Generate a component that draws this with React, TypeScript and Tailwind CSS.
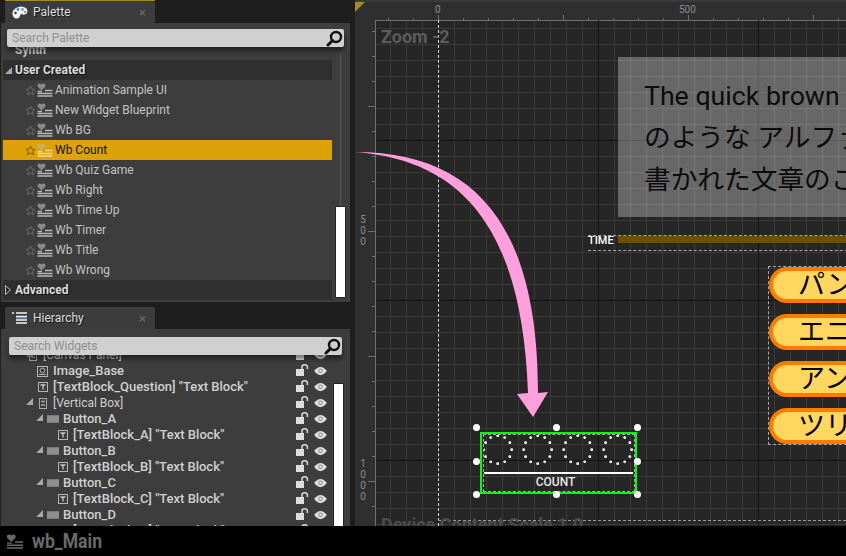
import React from "react";

const Search = () => (
  <svg width="17" height="17" viewBox="0 0 17 17" className="shrink-0">
    <circle cx="10" cy="7" r="5" fill="none" stroke="#111" strokeWidth="2.4" />
    <path d="M6.5 10.5 L2 15" stroke="#111" strokeWidth="3" strokeLinecap="round" />
  </svg>
);

const Star = ({ c = "#6a6a6a" }: { c?: string }) => (
  <svg width="11" height="11" viewBox="0 0 11 11" className="shrink-0">
    <path d="M5.5 1 L6.8 4 L10 4.3 L7.6 6.4 L8.4 9.7 L5.5 8 L2.6 9.7 L3.4 6.4 L1 4.3 L4.2 4 Z" fill="none" stroke={c} strokeWidth="1" />
  </svg>
);

const WidgetIcon = ({ c = "#8a8a8a", l = "#b8b8b8", w = 16, h = 14 }: { c?: string; l?: string; w?: number; h?: number }) => (
  <svg width={w} height={h} viewBox="0 0 16 14" className="shrink-0">
    <path d="M4.5 7.5 L0.5 3.5 Q0 1 2 0.5 Q3.6 0.3 4.5 1.5 Q5.4 0.3 7 0.5 Q9 1 8.5 3.5 Z" fill={c} />
    <path d="M0.5 8.5 H5 M8 7.5 H15.5 M0.5 10.5 H15.5 M0.5 13 H15.5" stroke={l} strokeWidth="1.3" />
  </svg>
);

const Lock = () => (
  <svg width="13" height="12" viewBox="0 0 13 12" className="shrink-0">
    <rect x="0" y="5" width="8" height="7" fill="#dcdcdc" />
    <path d="M6 5 V3 Q6 0.8 8.6 0.8 Q11.4 0.8 11.4 3 V5" fill="none" stroke="#dcdcdc" strokeWidth="1.5" />
  </svg>
);

const Eye = () => (
  <svg width="13" height="10" viewBox="0 0 13 10" className="shrink-0">
    <path d="M0.5 5 Q6.5 -2.5 12.5 5 Q6.5 12.5 0.5 5 Z" fill="#e8e8e8" stroke="#e8e8e8" strokeWidth="0.6" />
    <circle cx="6.5" cy="4.8" r="2.4" fill="#8c8c8c" />
    <circle cx="6.5" cy="4.8" r="1.2" fill="#e8e8e8" />
  </svg>
);

const Tri = () => (
  <svg width="7" height="7" viewBox="0 0 7 7" className="shrink-0">
    <path d="M7 0 V7 H0 Z" fill="#a8a8a8" />
  </svg>
);

const TIcon = () => (
  <svg width="10" height="10" viewBox="0 0 10 10" className="shrink-0">
    <rect x="0.5" y="0.5" width="9" height="9" fill="none" stroke="#b4b4b4" />
    <path d="M2.5 3 H7.5 M5 3 V7.5" stroke="#c8c8c8" strokeWidth="1.3" />
  </svg>
);

const ImageIcon = () => (
  <svg width="11" height="11" viewBox="0 0 11 11" className="shrink-0">
    <rect x="0.5" y="0.5" width="10" height="10" fill="none" stroke="#b4b4b4" />
    <circle cx="5.5" cy="4.5" r="2.4" fill="none" stroke="#b4b4b4" />
    <path d="M2 8.5 H9" stroke="#b4b4b4" />
  </svg>
);

const VBoxIcon = () => (
  <svg width="8" height="11" viewBox="0 0 8 11" className="shrink-0">
    <rect x="0.5" y="0.5" width="7" height="10" fill="none" stroke="#a8a8a8" />
    <path d="M2 3.5 H6 M2 7 H6" stroke="#a8a8a8" strokeWidth="1.4" />
  </svg>
);

const ButtonIcon = () => <div className="w-[12px] h-[8px] shrink-0 bg-[#8e8e8e] border-y border-[#7a7a7a]" />;

const palette = ["Animation Sample UI", "New Widget Blueprint", "Wb BG", "Wb Count", "Wb Quiz Game", "Wb Right", "Wb Time Up", "Wb Timer", "Wb Title", "Wb Wrong"];

type H = { t: string; tri?: number; icon: React.ReactNode; x: number; tx: number; w?: string };
const hierarchy: H[] = [
  { t: "[Canvas Panel]", tri: 26, icon: <VBoxIcon />, x: 29, tx: 43, w: "font-normal text-[12px]" },
  { t: "Image_Base", icon: <ImageIcon />, x: 37, tx: 53 },
  { t: '[TextBlock_Question] "Text Block"', icon: <TIcon />, x: 38, tx: 53 },
  { t: "[Vertical Box]", tri: 26, icon: <VBoxIcon />, x: 39, tx: 53, w: "font-normal text-[12px]" },
  { t: "Button_A", tri: 36, icon: <ButtonIcon />, x: 47, tx: 63 },
  { t: '[TextBlock_A] "Text Block"', icon: <TIcon />, x: 58, tx: 73 },
  { t: "Button_B", tri: 36, icon: <ButtonIcon />, x: 47, tx: 63 },
  { t: '[TextBlock_B] "Text Block"', icon: <TIcon />, x: 58, tx: 73 },
  { t: "Button_C", tri: 36, icon: <ButtonIcon />, x: 47, tx: 63 },
  { t: '[TextBlock_C] "Text Block"', icon: <TIcon />, x: 58, tx: 73 },
  { t: "Button_D", tri: 36, icon: <ButtonIcon />, x: 47, tx: 63 },
  { t: '[TextBlock_D] "Text Block"', icon: <TIcon />, x: 58, tx: 73 },
];

const Tab = ({ icon, label }: { icon: React.ReactNode; label: string }) => (
  <div className="ml-[5px] w-[150px] h-[22px] bg-[#3c3c3c] flex items-center pl-[6px] pr-[9px] gap-[5px] rounded-t-[2px]">
    <span className="w-[17px] flex justify-center">{icon}</span>
    <span className="flex-1 text-[12px] text-[#dcdcdc] [text-shadow:1px_1px_0_#1a1a1a]">{label}</span>
    <span className="text-[13px] leading-none text-[#6a6a6a]">×</span>
  </div>
);

const SearchBar = ({ ph, cls }: { ph: string; cls: string }) => (
  <div className={"relative z-10 h-[18px] rounded-[2px] bg-[#d0d0d0] flex items-center justify-between pl-[5px] pr-[1px] text-[12px] text-[#8f8f8f] shadow-[0_4px_4px_rgba(0,0,0,0.45)] " + cls}>
    <span>{ph}</span>
    <Search />
  </div>
);

const Ring = ({ cx }: { cx: number }) => (
  <>
    {Array.from({ length: 12 }).map((_, i) => {
      const a = (i * Math.PI) / 6;
      return <circle key={i} cx={cx + 14 * Math.sin(a)} cy={14.7 + 14 * Math.cos(a)} r="1.4" fill="#fff" />;
    })}
  </>
);

const Handle = ({ cls }: { cls: string }) => <div className={"absolute w-[7px] h-[7px] rounded-full bg-white " + cls} />;

const PillRow = ({ t }: { t: string }) => (
  <div className="h-[36px] rounded-l-full border-y-[4px] border-l-[4px] border-[#ff7b00] bg-[#ffd75e] pl-[25px] text-[27px] leading-[28px] text-black whitespace-nowrap">{t}</div>
);

export default function App() {
  return (
    <div className="w-[846px] h-[556px] overflow-hidden flex flex-col bg-[#1e1e1e] font-['Roboto','Noto_Sans_CJK_JP',sans-serif]">
      <div className="flex-1 flex min-h-0">
        {/* left column */}
        <div className="w-[350px] shrink-0 flex flex-col">
          <div className="ml-[5px] w-[150px] h-[1px] bg-[#a88a20]" />
          <Tab
            label="Palette"
            icon={
              <svg width="16" height="13" viewBox="0 0 16 13">
                <path d="M1 10 Q-1 5 4 2 Q9 -1 14 2 Q17 5 14 8 Q11 9.5 10 8 Q8 8 8 10 Q7 13 4 12.5 Q2 12.5 1 10 Z" fill="#f2f2f2" />
                <circle cx="6" cy="3.5" r="1.4" fill="#3b86c9" />
                <circle cx="10.5" cy="3.5" r="1.4" fill="#6aa5d8" />
                <circle cx="13" cy="6" r="1.1" fill="#5a8fc0" />
                <circle cx="3.5" cy="7" r="1.3" fill="#444" />
              </svg>
            }
          />
          <div className="ml-[1px] h-[279px] bg-[#3d3d3d] pt-[6px] pl-[2px] relative overflow-hidden">
            <SearchBar ph="Search Palette" cls="ml-[4px] w-[337px]" />
            <div className="-mt-[7px] w-[329px]">
              <div className="h-[20px] flex items-center pl-[2px] gap-[3px] text-[12px] font-bold text-[#c8c8c8]"><span className="w-[7px]" />Synth</div>
              <div className="h-[20px] flex items-center pl-[2px] gap-[3px] bg-[#2f2f2f] text-[12px] font-bold text-[#dcdcdc] [text-shadow:1px_1px_0_#111]"><Tri />User Created</div>
              {palette.map((p) => {
                const sel = p === "Wb Count";
                return (
                  <div key={p} className={"h-[20px] flex items-center pl-[22px] text-[12px] " + (sel ? "bg-[#dca208] text-[#111]" : "text-[#c4c4c4]")}>
                    <Star c={sel ? "#7a5a00" : "#6a6a6a"} />
                    <span className="ml-[1px] mr-[2px]">{sel ? <WidgetIcon c="#c8b060" l="#f0d890" /> : <WidgetIcon />}</span>
                    {p}
                  </div>
                );
              })}
              <div className="h-[20px] flex items-center pl-[2px] gap-[4px] bg-[#2f2f2f] text-[12px] font-bold text-[#dcdcdc] [text-shadow:1px_1px_0_#111]">
                <svg width="6" height="10" viewBox="0 0 6 10"><path d="M0.5 0.5 L5.5 5 L0.5 9.5 Z" fill="none" stroke="#b8b8b8" /></svg>
                Advanced
              </div>
            </div>
            {/* scrollbar of the palette list */}
            <div className="absolute left-[339px] top-[30px] bottom-[5px] w-[1px] bg-[#555]" />
            <div className="absolute left-[334px] top-[183px] w-[11px] h-[92px] bg-white rounded-[1px] border border-[#222]" />
          </div>

          <div className="h-[5px] shrink-0" />
          <Tab
            label="Hierarchy"
            icon={
              <svg width="15" height="12" viewBox="0 0 15 12">
                <path d="M0 1 H2 M4 1 H15 M4 4.5 H15 M4 8 H15 M4 11 H15" stroke="#f2f2f2" strokeWidth="1.6" />
                <path d="M4 6 H15" stroke="#7fb6de" strokeWidth="1" />
              </svg>
            }
          />
          <div className="ml-[1px] flex-1 min-h-0 bg-[#3d3d3d] pt-[8px] relative overflow-hidden">
            <SearchBar ph="Search Widgets" cls="ml-[8px] w-[333px]" />
            <div className="-mt-[8px]">
              {hierarchy.map((h) => (
                <div key={h.t} className="relative h-[16px] text-[#d0d0d0] whitespace-nowrap">
                  {h.tri !== undefined && <span className="absolute top-[3px]" style={{ left: h.tri - 1 }}><Tri /></span>}
                  <span className="absolute top-0 h-[16px] flex items-center" style={{ left: h.x - 1 }}>{h.icon}</span>
                  <span className={"absolute top-0 leading-[16px] " + (h.w ?? "font-medium text-[13px]")} style={{ left: h.tx - 1 }}>{h.t}</span>
                  <span className="absolute left-[295px] top-[1px]"><Lock /></span>
                  <span className="absolute left-[313px] top-[3px]"><Eye /></span>
                </div>
              ))}
            </div>
            <div className="absolute left-[332px] top-[54px] w-[11px] h-[170px] bg-white border border-[#222] rounded-[1px]" />
          </div>
        </div>

        <div className="w-[5px] shrink-0" />

        {/* designer canvas */}
        <div className="relative flex-1 min-w-0 overflow-hidden bg-[#2f2f2f] border-t-[2px] border-[#3a3a3a]">
          <div className="absolute left-0 top-0 w-0 h-0 border-t-[10px] border-r-[10px] border-t-[#a88a20] border-r-transparent" />

          {/* rulers */}
          <div className="absolute left-[80px] top-[2px] text-[10px] leading-[12px] text-[#8c8c8c]">0</div>
          <div className="absolute left-[324px] top-[2px] text-[10px] leading-[12px] text-[#8c8c8c]">500</div>
          <div className="absolute left-[4px] top-[212px] w-[8px] text-center text-[10px] leading-[11px] text-[#8c8c8c]">5<br />0<br />0</div>
          <div className="absolute left-[4px] top-[456px] w-[8px] text-center text-[10px] leading-[11px] text-[#8c8c8c]">1<br />0<br />0<br />0</div>
          {Array.from({ length: 19 }).map((_, i) => {
            const x = 33 + i * 25;
            const long = (x - 83) % 125 === 0;
            return <div key={i} className="absolute w-[1px] bg-[#6c6c6c]" style={{ left: x, top: long ? 13 : 16, height: long ? 5 : 2 }} />;
          })}
          {Array.from({ length: 21 }).map((_, i) => {
            const y = 29 + i * 25;
            const long = (y - 104) % 125 === 0;
            return <div key={i} className="absolute h-[1px] bg-[#6c6c6c]" style={{ top: y, left: long ? 13 : 17, width: long ? 7 : 3 }} />;
          })}

          {/* grid */}
          <div className="absolute left-[20px] top-[18px] right-0 bottom-0 border-l border-[#707070] shadow-[inset_0_1px_0_#707070] bg-[#262626] bg-[linear-gradient(to_right,#3a3a3a_1px,transparent_1px),linear-gradient(to_bottom,#3a3a3a_1px,transparent_1px)] bg-[size:16px_16px] bg-[position:14px_8px]">
            {[62, 222, 382].map((x) => (
              <div key={x} className="absolute top-0 bottom-0 w-[1px] bg-[#141414]" style={{ left: x }} />
            ))}
            {[120, 280, 440].map((y) => (
              <div key={y} className="absolute left-0 right-0 h-[1px] bg-[#141414]" style={{ top: y }} />
            ))}

            {/* device bounds */}
            <div className="absolute left-[62px] top-0 bottom-0 border-l border-dashed border-[#dcdcdc]" />
            <div className="absolute left-[62px] right-0 top-[500px] border-t border-dashed border-[#9a9a9a]" />

            <div className="absolute left-[5px] top-[5px] text-[18px] leading-[24px] font-bold text-[#5c5c5c]">Zoom -2</div>
            <div className="absolute left-[5px] top-[493px] text-[18px] leading-[24px] font-bold text-[#4c4c4c] whitespace-nowrap">Device Content Scale 1.0</div>

            {/* question text box */}
            <div className="absolute left-[242px] top-[37px] w-[300px] h-[160px] bg-white/30 pl-[26px] pt-[18px] text-[26.7px] leading-[42px] text-[#0c0c0c] whitespace-nowrap overflow-hidden">
              The quick brown fox<br />のような アルファベット<br />書かれた文章のことです
            </div>

            {/* timer */}
            <div className="absolute left-[212px] top-[215px] w-[300px] h-[16px] border-y border-dashed border-[#a8a8a8]">
              <span className="absolute left-0 -top-[1px] text-[11px] leading-[11px] pt-[0px] font-medium text-white">TIME</span>
              <div className="absolute left-[30px] top-0 right-0 h-[7px] bg-[#6b5000]" />
            </div>

            {/* answer buttons */}
            <div className="absolute left-[392px] top-[246px] w-[150px] h-[179px] border border-dashed border-[#a8a8a8] flex flex-col gap-[11px]">
              <PillRow t="パンダ" />
              <PillRow t="エニグマ" />
              <PillRow t="アンテナ" />
              <PillRow t="ツリー" />
            </div>

            {/* selected count widget */}
            <div className="absolute left-[104px] top-[412px] w-[157px] h-[62px] border-2 border-[#00ff00]">
              <div className="ml-[1px] w-[152px] h-[58px] border border-dashed border-[#a8a8a8] flex flex-col">
                <svg width="150" height="37" viewBox="0 0 150 37" className="shrink-0">
                  <Ring cx={13.7} />
                  <Ring cx={53.7} />
                  <Ring cx={93.7} />
                  <Ring cx={133.7} />
                </svg>
                <div className="w-[149px] h-[2px] bg-white" />
                <div className="w-[143px] text-center text-[12px] leading-[17px] font-medium text-[#e8e8e8]">COUNT</div>
              </div>
              <Handle cls="-left-[9px] -top-[10px]" />
              <Handle cls="left-[71px] -top-[10px]" />
              <Handle cls="left-[152px] -top-[10px]" />
              <Handle cls="-left-[9px] top-[24px]" />
              <Handle cls="left-[152px] top-[24px]" />
              <Handle cls="-left-[9px] top-[57px]" />
              <Handle cls="left-[71px] top-[57px]" />
              <Handle cls="left-[152px] top-[57px]" />
            </div>
          </div>

          {/* annotation arrow */}
          <svg className="absolute left-0 top-0" width="491" height="524" viewBox="355 2 491 524">
            <path d="M355 152 C 475 152 538 225 538 393 L548 392 L533 417 L517 394 L528 393 C 522 225 460 160 355 152 Z" fill="#ff9fdc" />
          </svg>
        </div>
      </div>

      <div className="h-[30px] shrink-0 bg-black flex items-center pl-[6px] gap-[8px]">
        <WidgetIcon c="#6a6a6a" l="#6a6a6a" w={18} h={15} />
        <span className="text-[20px] leading-none font-bold text-[#6a6a6a] scale-x-[0.88] origin-left">wb_Main</span>
      </div>
    </div>
  );
}
